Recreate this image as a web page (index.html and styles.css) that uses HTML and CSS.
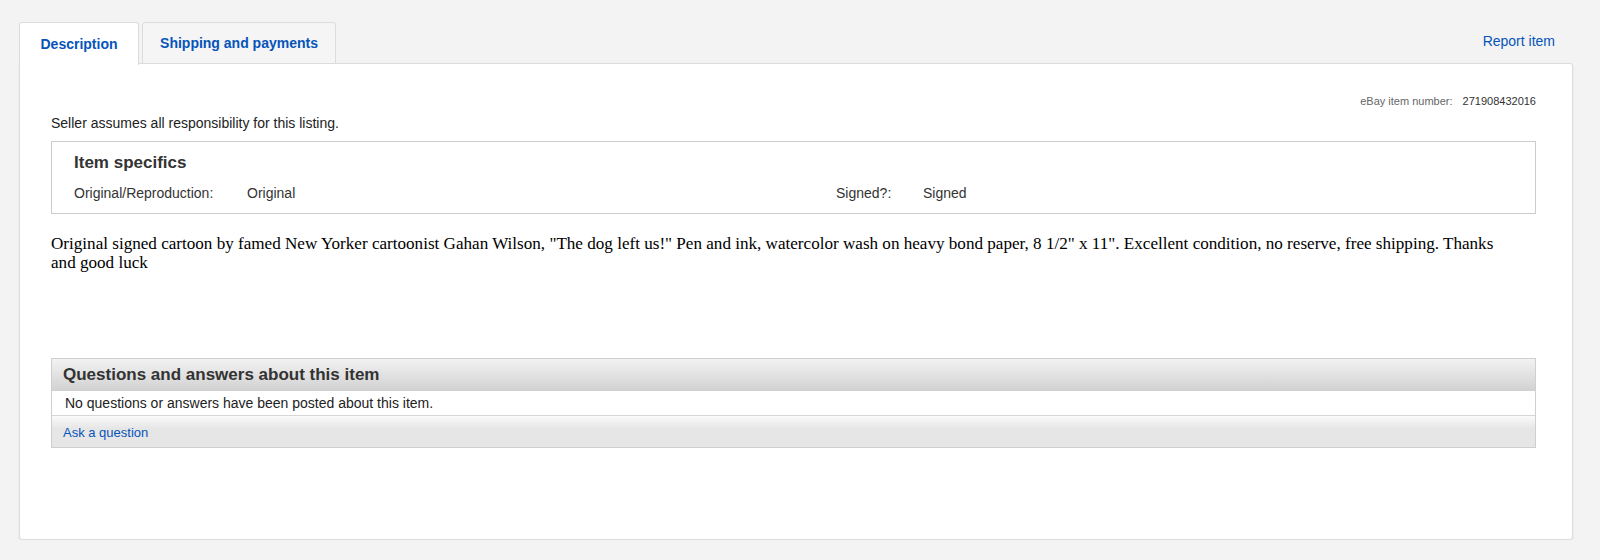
FILE: index.html
```html
<!DOCTYPE html>
<html>

<head>
    <meta charset="utf-8">
    <title>Item description</title>
    <link rel="stylesheet" href="styles.css">
</head>

<body>
    <div class="wrap">
        <div class="tabbar">
            <a class="tab active" href="#">Description</a>
            <a class="tab" href="#">Shipping and payments</a>
            <a class="report" href="#">Report item</a>
        </div>

        <div class="panel">
            <div class="item-num">
                <span class="lbl">eBay item number:</span>
                <span class="num">271908432016</span>
            </div>
            <div class="seller">Seller assumes all responsibility for this listing.</div>

            <div class="specifics">
                <h2>Item specifics</h2>
                <div class="spec-row">
                    <div class="spec">
                        <span class="spec-name">Original/Reproduction:</span>
                        <span class="spec-val">Original</span>
                    </div>
                    <div class="spec">
                        <span class="spec-name">Signed?:</span>
                        <span class="spec-val">Signed</span>
                    </div>
                </div>
            </div>

            <div class="desc">
                Original signed cartoon by famed New Yorker cartoonist Gahan Wilson, "The dog left us!" Pen and ink, watercolor wash on heavy bond paper, 8 1/2" x 11". Excellent condition, no reserve, free shipping. Thanks and good luck
            </div>

            <div class="qa">
                <div class="qa-head">Questions and answers about this item</div>
                <div class="qa-body">No questions or answers have been posted about this item.</div>
                <div class="qa-foot"><a href="#">Ask a question</a></div>
            </div>
        </div>
    </div>
</body>

</html>
```

FILE: styles.css
```css
body {
    margin: 0;
    padding: 0;
    background-color: #f3f3f3;
    font-family: "Liberation Sans", Arial, sans-serif;
    color: #333;
}

a {
    text-decoration: none;
    color: #0654ba;
}

.wrap {
    width: 1554px;
    padding-top: 22px;
    margin-left: 19px;
}

.tabbar {
    display: flex;
    align-items: flex-start;
    height: 42px;
    gap: 3px;
    position: relative;
    z-index: 1;
    margin-bottom: -1px;
}

.tab {
    display: flex;
    align-items: center;
    justify-content: center;
    box-sizing: border-box;
    border: 1px solid #dcdcdc;
    border-bottom: none;
    border-radius: 3px 3px 0 0;
    background-color: #f5f5f5;
    font-size: 14px;
    font-weight: bold;
}

.tab.active {
    background-color: #fff;
    width: 120px;
    height: 43px;
    padding-bottom: 1px;
}

.tab:nth-child(2) {
    width: 194px;
    height: 42px;
    border-bottom: 1px solid #dcdcdc;
}

.report {
    margin-left: auto;
    margin-right: 18px;
    font-size: 14px;
    padding-top: 11px;
}

.panel {
    background-color: #fff;
    border: 1px solid #dcdcdc;
    border-radius: 0 3px 3px 3px;
    box-shadow: 0 1px 3px rgba(0, 0, 0, 0.06);
    height: 475px;
    padding: 0 36px 0 31px;
}

.item-num {
    text-align: right;
    font-size: 11px;
    padding-top: 30px;
    line-height: 14px;
}

.item-num .lbl {
    color: #666;
    margin-right: 7px;
}

.item-num .num {
    color: #333;
}

.seller {
    font-size: 14px;
    color: #222;
    margin-top: 7px;
    line-height: 17px;
}

.specifics {
    border: 1px solid #ccc;
    margin-top: 9px;
    height: 71px;
    padding: 0 22px;
}

.specifics h2 {
    font-size: 17px;
    margin: 11px 0 0 0;
    line-height: 20px;
    color: #333;
}

.spec-row {
    display: flex;
    margin-top: 12px;
    font-size: 14px;
    line-height: 17px;
    color: #333;
}

.spec {
    display: flex;
    flex: 0 0 auto;
    width: 762px;
}

.spec:last-child {
    width: auto;
}

.spec-name {
    width: 173px;
}

.spec:last-child .spec-name {
    width: 87px;
}

.desc {
    font-family: "Liberation Serif", "Times New Roman", serif;
    font-size: 17.1px;
    line-height: 19px;
    color: #000;
    margin-top: 20px;
    max-width: 1455px;
}

.qa {
    margin-top: 86px;
    border: 1px solid #cfcfcf;
}

.qa-head {
    height: 31px;
    line-height: 31px;
    padding-left: 11px;
    font-size: 17px;
    font-weight: bold;
    color: #333;
    background: linear-gradient(#f2f2f2, #d2d2d2);
    border-bottom: 1px solid #cfcfcf;
}

.qa-body {
    height: 24px;
    line-height: 24px;
    padding-left: 13px;
    font-size: 14px;
    color: #222;
    border-bottom: 1px solid #d6d6d6;
}

.qa-foot {
    height: 31px;
    line-height: 31px;
    padding-left: 11px;
    background: linear-gradient(#fafafa, #e6e6e6 40%, #e6e6e6);
}

.qa-foot a {
    font-size: 13px;
}
```
